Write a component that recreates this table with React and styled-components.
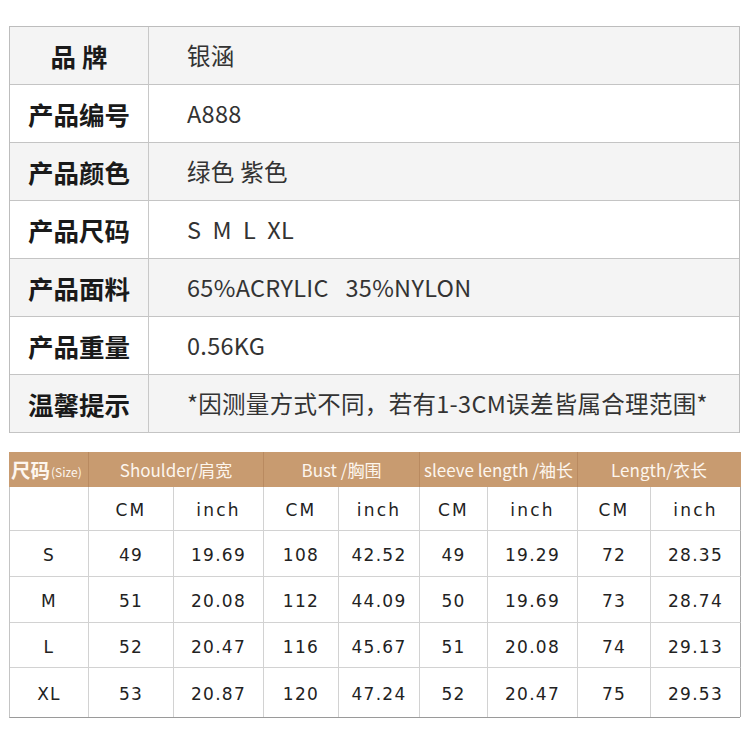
import React from "react";
import styled, { createGlobalStyle } from "styled-components";

const Global = createGlobalStyle`
  html, body { margin: 0; padding: 0; background: #fff; }
  body { font-family: "Noto Sans CJK SC", "Noto Sans", sans-serif; }
  * { box-sizing: border-box; }
`;

const Page = styled.div`
  width: 750px;
  height: 742px;
  padding: 26px 10px 0 9px;
  display: flex;
  flex-direction: column;
  gap: 19px;
`;

const InfoTable = styled.div`
  display: grid;
  grid-template-columns: 139px 1fr;
  grid-auto-rows: 58px;
  border: 1px solid #bdbdbd;
  border-bottom: none;
`;

const InfoLabel = styled.div`
  display: flex;
  align-items: center;
  justify-content: center;
  background: ${(p) => (p.$shade ? "#f4f4f4" : "#fff")};
  border-right: 1px solid #c8c8c8;
  border-bottom: 1px solid #c4c4c4;
  font-family: "Noto Sans CJK SC", sans-serif;
  font-weight: 700;
  font-size: 25.5px;
  color: #1a1a1a;
  white-space: pre;
  padding-bottom: 1px;
`;

const InfoValue = styled.div`
  display: flex;
  align-items: center;
  padding-left: 38px;
  background: ${(p) => (p.$shade ? "#f4f4f4" : "#fff")};
  border-bottom: 1px solid #c4c4c4;
  font-family: "Noto Sans CJK SC", sans-serif;
  font-size: 23.5px;
  letter-spacing: 0.3px;
  color: #333;
  white-space: pre;
  padding-bottom: 1px;
`;

const SizeTable = styled.div`
  display: grid;
  grid-template-columns: 79px 85px 90px 75px 81px 68px 90px 73px 90px;
  grid-template-rows: 35px 44px 46px 46px 45px 49px;
  width: 731px;
  border-left: 1px solid #c4c4c4;
  border-bottom: 1px solid #9a9a9a;
`;

const HeadCell = styled.div`
  grid-column: span ${(p) => p.$span || 1};
  display: flex;
  align-items: center;
  justify-content: ${(p) => (p.$left ? "flex-start" : "center")};
  padding-left: ${(p) => (p.$left ? "2px" : "0")};
  background: #c89b70;
  color: #fdf6ee;
  font-family: "Noto Sans CJK SC", sans-serif;
  font-size: 17px;
  border-right: 1px solid ${(p) => (p.$last ? "#c89b70" : "#b98a60")};
  white-space: pre;
  margin-left: ${(p) => (p.$first ? "-1px" : "0")};
`;

const SizeMain = styled.span`
  font-size: 19.5px;
  font-weight: 700;
`;

const SizeSub = styled.span`
  font-size: 12px;
  margin-left: 1px;
  margin-top: 3px;
`;

const Cell = styled.div`
  display: flex;
  align-items: center;
  justify-content: center;
  border-right: 1px solid ${(p) => (p.$last ? "#a8a8a8" : "#d2d2d2")};
  border-bottom: ${(p) => (p.$noBottom ? "none" : "1px solid #d2d2d2")};
  font-family: "DejaVu Sans", sans-serif;
  font-size: 17px;
  letter-spacing: ${(p) => (p.$wide ? "2.2px" : "1.3px")};
  color: #222;
  padding-top: 3px;
`;

const info = [
  ["品 牌", "银涵"],
  ["产品编号", "A888"],
  ["产品颜色", "绿色 紫色"],
  ["产品尺码", "S  M  L  XL"],
  ["产品面料", "65%ACRYLIC   35%NYLON"],
  ["产品重量", "0.56KG"],
  ["温馨提示", "*因测量方式不同，若有1-3CM误差皆属合理范围*"],
];

const heads = [
  { label: "Shoulder/肩宽", span: 2 },
  { label: "Bust /胸围", span: 2 },
  { label: "sleeve length /袖长", span: 2 },
  { label: "Length/衣长", span: 2, last: true },
];

const rows = [
  ["S", "49", "19.69", "108", "42.52", "49", "19.29", "72", "28.35"],
  ["M", "51", "20.08", "112", "44.09", "50", "19.69", "73", "28.74"],
  ["L", "52", "20.47", "116", "45.67", "51", "20.08", "74", "29.13"],
  ["XL", "53", "20.87", "120", "47.24", "52", "20.47", "75", "29.53"],
];

const units = ["", "CM", "inch", "CM", "inch", "CM", "inch", "CM", "inch"];

export default function App() {
  return (
    <>
      <Global />
      <Page>
        <InfoTable>
          {info.map(([k, v], i) => (
            <React.Fragment key={k}>
              <InfoLabel $shade={i % 2 === 0}>{k}</InfoLabel>
              <InfoValue $shade={i % 2 === 0}>{v}</InfoValue>
            </React.Fragment>
          ))}
        </InfoTable>
        <SizeTable>
          <HeadCell $left $first>
            <SizeMain>尺码</SizeMain>
            <SizeSub>(Size)</SizeSub>
          </HeadCell>
          {heads.map((h) => (
            <HeadCell key={h.label} $span={h.span} $last={h.last}>
              {h.label}
            </HeadCell>
          ))}
          {units.map((u, i) => (
            <Cell key={"u" + i} $wide $last={i === 8}>
              {u}
            </Cell>
          ))}
          {rows.map((r, ri) =>
            r.map((v, ci) => (
              <Cell
                key={ri + "-" + ci}
                $last={ci === 8}
                $noBottom={ri === rows.length - 1}
              >
                {v}
              </Cell>
            ))
          )}
        </SizeTable>
      </Page>
    </>
  );
}
